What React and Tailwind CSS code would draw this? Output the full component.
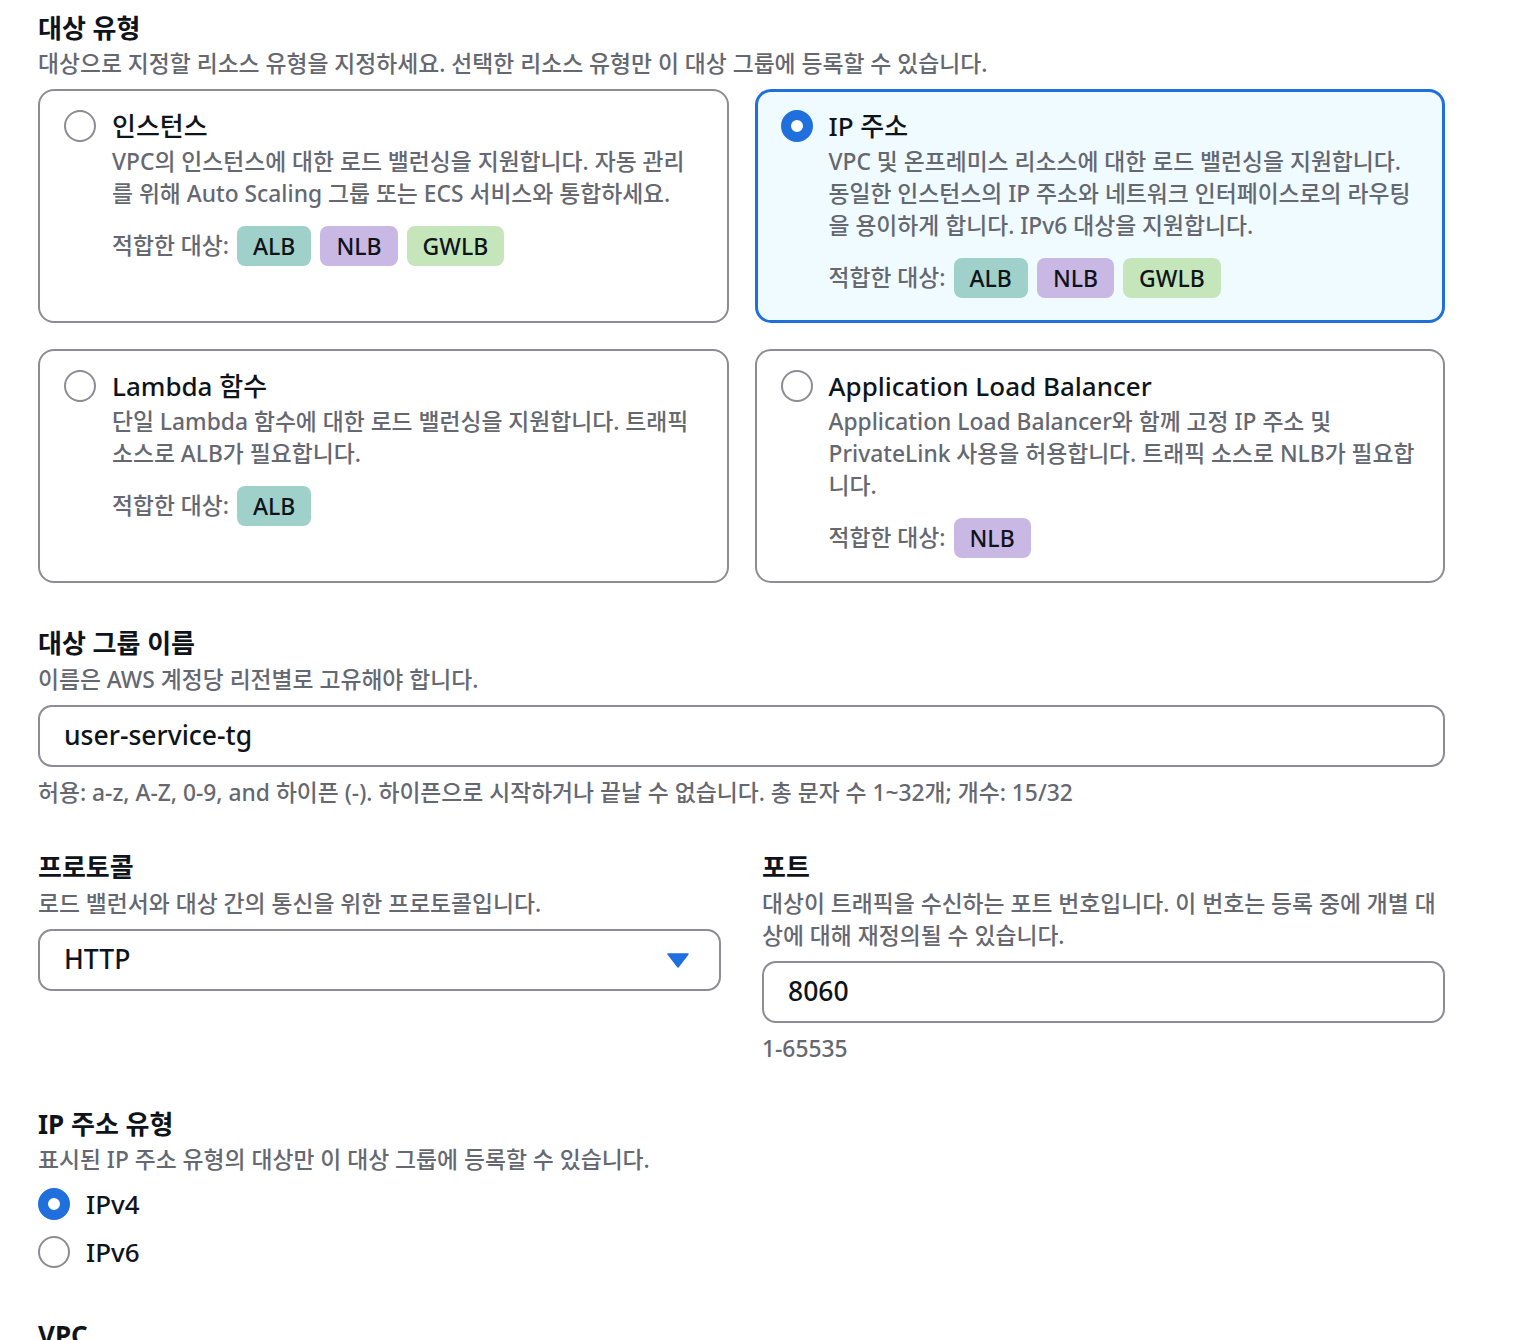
import React from "react";

const FONT = { fontFamily: '"Noto Sans", "Noto Sans CJK KR", sans-serif' };

function Radio({ checked }) {
  if (checked) {
    return (
      <span className="block shrink-0 w-[32px] h-[32px] rounded-full border-[10px] border-[#1f6fdd] bg-white box-border" />
    );
  }
  return (
    <span className="block shrink-0 w-[32px] h-[32px] rounded-full border-2 border-[#8c8c94] bg-white box-border" />
  );
}

const BADGE = {
  ALB: "bg-[#9fd0ca]",
  NLB: "bg-[#c9b8e4]",
  GWLB: "bg-[#c5e6ba]",
};

function Card({ selected, left, title, desc, badges }) {
  let cls;
  if (selected) {
    cls = "border-[3px] border-[#1f6fdd] bg-[#f0fbff] pl-[23px] pr-[19px] pt-[17px] pb-[22px]";
  } else if (left) {
    cls = "border-2 border-[#8c8c94] bg-white pl-[24px] pr-[28px] pt-[18px] pb-[23px]";
  } else {
    cls = "border-2 border-[#8c8c94] bg-white pl-[24px] pr-[20px] pt-[18px] pb-[23px]";
  }
  return (
    <div className={"rounded-[16px] flex gap-[16px] " + cls}>
      <div className="pt-[1px]">
        <Radio checked={selected} />
      </div>
      <div className="flex-1 min-w-0">
        <div className="text-[26px] leading-[34px] font-medium text-[#0f141a]">{title}</div>
        <div className="mt-[3px] text-[22.8px] leading-[32px] font-medium text-[#656871]">{desc}</div>
        <div className="mt-[16px] flex items-center">
          <span className="text-[22.8px] leading-[32px] font-medium text-[#656871] mr-[8px]">적합한 대상:</span>
          <div className="flex gap-[9px]">
            {badges.map((b) => (
              <span
                key={b}
                className={
                  "h-[40px] px-[16px] rounded-[8px] flex items-center text-[23px] font-medium text-[#0f141a] " +
                  BADGE[b]
                }
              >
                {b}
              </span>
            ))}
          </div>
        </div>
      </div>
    </div>
  );
}

function Heading({ children, className = "" }) {
  return (
    <div className={"text-[26px] leading-[38px] font-bold text-[#0f141a] " + className}>
      {children}
    </div>
  );
}

function Desc({ children, className = "" }) {
  return (
    <div className={"text-[22.8px] leading-[32px] font-medium text-[#656871] " + className}>{children}</div>
  );
}

function Input({ value, children }) {
  return (
    <div className="h-[62px] rounded-[14px] border-2 border-[#8c8c94] bg-white flex items-center pl-[24px] pr-[28px] text-[26.5px] font-medium text-[#0f141a]">
      <span className="flex-1">{value}</span>
      {children}
    </div>
  );
}

export default function App() {
  return (
    <div className="bg-white min-h-[1340px] pl-[38px] pr-[77px] pt-[9px]" style={FONT}>
      <Heading>대상 유형</Heading>
      <Desc className="mt-[1px]">
        대상으로 지정할 리소스 유형을 지정하세요. 선택한 리소스 유형만 이 대상 그룹에 등록할 수 있습니다.
      </Desc>
      <div className="mt-[9px] grid grid-cols-2 gap-[26px]">
        <Card
          left
          title="인스턴스"
          desc="VPC의 인스턴스에 대한 로드 밸런싱을 지원합니다. 자동 관리를 위해 Auto Scaling 그룹 또는 ECS 서비스와 통합하세요."
          badges={["ALB", "NLB", "GWLB"]}
        />
        <Card
          selected
          title="IP 주소"
          desc="VPC 및 온프레미스 리소스에 대한 로드 밸런싱을 지원합니다. 동일한 인스턴스의 IP 주소와 네트워크 인터페이스로의 라우팅을 용이하게 합니다. IPv6 대상을 지원합니다."
          badges={["ALB", "NLB", "GWLB"]}
        />
        <Card
          left
          title="Lambda 함수"
          desc="단일 Lambda 함수에 대한 로드 밸런싱을 지원합니다. 트래픽 소스로 ALB가 필요합니다."
          badges={["ALB"]}
        />
        <Card
          title="Application Load Balancer"
          desc="Application Load Balancer와 함께 고정 IP 주소 및 PrivateLink 사용을 허용합니다. 트래픽 소스로 NLB가 필요합니다."
          badges={["NLB"]}
        />
      </div>

      <Heading className="mt-[41px]">대상 그룹 이름</Heading>
      <Desc className="mt-[2px]">이름은 AWS 계정당 리전별로 고유해야 합니다.</Desc>
      <div className="mt-[9px]">
        <Input value="user-service-tg" />
      </div>
      <Desc className="mt-[10px]">
        허용: a-z, A-Z, 0-9, and 하이픈 (-). 하이픈으로 시작하거나 끝날 수 없습니다. 총 문자 수 1~32개; 개수: 15/32
      </Desc>

      <div className="mt-[39px] grid grid-cols-[683px_683px] gap-x-[41px]">
        <div>
          <Heading>프로토콜</Heading>
          <Desc className="mt-[2px]">로드 밸런서와 대상 간의 통신을 위한 프로토콜입니다.</Desc>
          <div className="mt-[9px]">
            <Input value="HTTP">
              <svg width="22" height="15" viewBox="0 0 22 15" className="mr-[2px]">
                <path d="M1 1 L21 1 L11 14 Z" fill="#1f6fdd" stroke="#1f6fdd" strokeWidth="1.5" strokeLinejoin="round" />
              </svg>
            </Input>
          </div>
        </div>
        <div>
          <Heading>포트</Heading>
          <Desc className="mt-[2px]">
            대상이 트래픽을 수신하는 포트 번호입니다. 이 번호는 등록 중에 개별 대상에 대해 재정의될 수 있습니다.
          </Desc>
          <div className="mt-[9px]">
            <Input value="8060" />
          </div>
          <Desc className="mt-[10px]">1-65535</Desc>
        </div>
      </div>

      <Heading className="mt-[40px]">IP 주소 유형</Heading>
      <Desc className="mt-[1px]">표시된 IP 주소 유형의 대상만 이 대상 그룹에 등록할 수 있습니다.</Desc>
      <div className="mt-[12px] flex flex-col gap-[16px]">
        <div className="flex items-center gap-[16px] h-[32px]">
          <Radio checked />
          <span className="text-[26px] font-medium text-[#0f141a]">IPv4</span>
        </div>
        <div className="flex items-center gap-[16px] h-[32px]">
          <Radio />
          <span className="text-[26px] font-medium text-[#0f141a]">IPv6</span>
        </div>
      </div>

      <Heading className="mt-[48px]">VPC</Heading>
    </div>
  );
}
